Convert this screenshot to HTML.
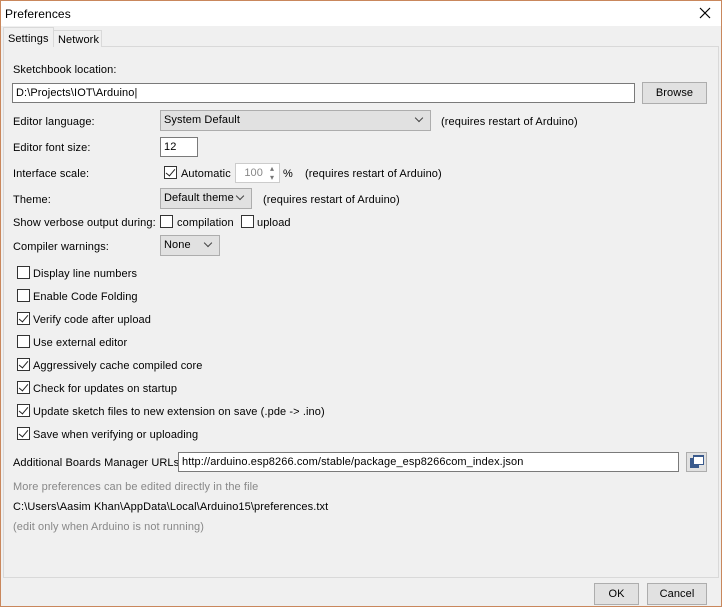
<!DOCTYPE html>
<html><head><style>
*{box-sizing:border-box}
body{margin:0;width:722px;height:607px;overflow:hidden;font-family:"Liberation Sans",sans-serif;font-size:11px;letter-spacing:0.1px;color:#000;background:#f0f0f0;position:relative}
.a{position:absolute;white-space:nowrap}
.t{position:absolute;line-height:14px;white-space:nowrap;margin-top:1px}
.cb{position:absolute;width:13px;height:13px;border:1px solid #333;background:#fff}
.cb.c::after{content:"";position:absolute;left:3px;top:0px;width:4px;height:8px;border:solid #222;border-width:0 1.3px 1.3px 0;transform:rotate(40deg)}
.inp{position:absolute;background:#fff;border:1px solid #7a7a7a;line-height:19px;padding-left:3px}
.sel{position:absolute;background:#e1e1e1;border:1px solid #adadad;line-height:19px;padding-left:3px}
.sel::after{content:"";position:absolute;right:8px;top:4px;width:5px;height:5px;border:solid #444;border-width:0 1px 1px 0;transform:rotate(45deg)}
.btn{position:absolute;background:#e1e1e1;border:1px solid #adadad;text-align:center;line-height:21px}
</style></head><body>
<div class="a" style="left:0;top:0;width:722px;height:26px;background:#fff"></div>
<div class="t" style="left:5px;top:6px;font-size:12px">Preferences</div>
<svg class="a" style="left:699px;top:7px" width="12" height="12"><path d="M1 1L11 11M11 1L1 11" stroke="#000" stroke-width="1.2"/></svg>
<div class="a" style="left:3px;top:46px;width:716px;height:532px;border:1px solid #d9d9d9;background:#f0f0f0"></div>
<div class="a" style="left:3px;top:27px;width:51px;height:20px;background:#f0f0f0;border:1px solid #d9d9d9;border-bottom:none"></div>
<div class="t" style="left:8px;top:31px">Settings</div>
<div class="a" style="left:54px;top:30px;width:48px;height:17px;background:#f0f0f0;border:1px solid #d9d9d9;border-left:none;border-bottom:none"></div>
<div class="t" style="left:58px;top:32px">Network</div>

<div class="t" style="left:13px;top:62px">Sketchbook location:</div>
<div class="inp" style="left:12px;top:83px;width:623px;height:20px">D:\Projects\IOT\Arduino|</div>
<div class="btn" style="left:642px;top:82px;width:65px;height:22px">Browse</div>

<div class="t" style="left:13px;top:114px">Editor language:</div>
<div class="sel" style="left:160px;top:110px;width:271px;height:21px">System Default</div>
<div class="t" style="left:441px;top:114px">(requires restart of Arduino)</div>

<div class="t" style="left:13px;top:140px">Editor font size:</div>
<div class="inp" style="left:160px;top:137px;width:38px;height:20px">12</div>

<div class="t" style="left:13px;top:166px">Interface scale:</div>
<div class="cb c" style="left:164px;top:166px"></div>
<div class="t" style="left:181px;top:166px">Automatic</div>
<div class="inp" style="left:235px;top:163px;width:45px;height:20px;border-color:#ccc;color:#888;text-align:right;padding-right:16px">100</div>
<div class="t" style="left:270px;top:163px;font-size:8px;color:#777;line-height:9px">▴<br>▾</div>
<div class="t" style="left:283px;top:166px">%</div>
<div class="t" style="left:305px;top:166px">(requires restart of Arduino)</div>

<div class="t" style="left:13px;top:192px">Theme:</div>
<div class="sel" style="left:160px;top:188px;width:92px;height:21px">Default theme</div>
<div class="t" style="left:263px;top:192px">(requires restart of Arduino)</div>

<div class="t" style="left:13px;top:215px">Show verbose output during:</div>
<div class="cb" style="left:160px;top:215px"></div>
<div class="t" style="left:177px;top:215px">compilation</div>
<div class="cb" style="left:241px;top:215px"></div>
<div class="t" style="left:257px;top:215px">upload</div>

<div class="t" style="left:13px;top:239px">Compiler warnings:</div>
<div class="sel" style="left:160px;top:235px;width:60px;height:21px">None</div>

<div class="cb" style="left:17px;top:266px"></div><div class="t" style="left:33px;top:266px">Display line numbers</div>
<div class="cb" style="left:17px;top:289px"></div><div class="t" style="left:33px;top:289px">Enable Code Folding</div>
<div class="cb c" style="left:17px;top:312px"></div><div class="t" style="left:33px;top:312px">Verify code after upload</div>
<div class="cb" style="left:17px;top:335px"></div><div class="t" style="left:33px;top:335px">Use external editor</div>
<div class="cb c" style="left:17px;top:358px"></div><div class="t" style="left:33px;top:358px">Aggressively cache compiled core</div>
<div class="cb c" style="left:17px;top:381px"></div><div class="t" style="left:33px;top:381px">Check for updates on startup</div>
<div class="cb c" style="left:17px;top:404px"></div><div class="t" style="left:33px;top:404px">Update sketch files to new extension on save (.pde -&gt; .ino)</div>
<div class="cb c" style="left:17px;top:427px"></div><div class="t" style="left:33px;top:427px">Save when verifying or uploading</div>

<div class="t" style="left:13px;top:455px">Additional Boards Manager URLs:</div>
<div class="inp" style="left:178px;top:452px;width:501px;height:20px">http://arduino.esp8266.com/stable/package_esp8266com_index.json</div>
<div class="a" style="left:686px;top:452px;width:21px;height:20px;background:#e1e1e1;border:1px solid #adadad"></div>
<div class="a" style="left:690px;top:458px;width:9px;height:10px;background:#3a5a8c"></div>
<div class="a" style="left:693px;top:455px;width:11px;height:10px;background:#fff;border:1px solid #3a5a8c;border-top-width:2px"></div>

<div class="t" style="left:13px;top:479px;color:#888">More preferences can be edited directly in the file</div>
<div class="t" style="left:13px;top:499px">C:\Users\Aasim Khan\AppData\Local\Arduino15\preferences.txt</div>
<div class="t" style="left:13px;top:519px;color:#888">(edit only when Arduino is not running)</div>

<div class="btn" style="left:594px;top:583px;width:45px;height:22px">OK</div>
<div class="btn" style="left:647px;top:583px;width:60px;height:22px">Cancel</div>
<div class="a" style="left:0;top:0;width:722px;height:607px;border:1px solid #c9875c"></div>
</body></html>
